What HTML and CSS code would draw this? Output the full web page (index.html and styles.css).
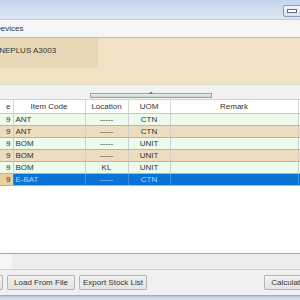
FILE: index.html
```html
<!DOCTYPE html>
<html lang="en">
<head>
    <meta charset="UTF-8">
    <title>Stock Take</title>
    <link rel="stylesheet" href="styles.css">
</head>
<body>
    <div class="window">
        <div class="title-bar">
            <button class="min-btn"><span class="dash"></span></button>
        </div>

        <div class="tab-strip">
            <span class="tab-label">Devices</span>
        </div>

        <div class="device-area">
            <div class="device-panel">
                <span class="device-name">ONEPLUS A3003</span>
            </div>
        </div>

        <div class="splitter-row">
            <div class="splitter">&#8963;</div>
        </div>

        <div class="grid-area">
            <table class="grid">
                <colgroup>
                    <col class="c-no">
                    <col class="c-item">
                    <col class="c-loc">
                    <col class="c-uom">
                    <col class="c-remark">
                    <col>
                </colgroup>
                <thead>
                    <tr>
                        <th class="no">e</th>
                        <th>Item Code</th>
                        <th>Location</th>
                        <th>UOM</th>
                        <th>Remark</th>
                        <th></th>
                    </tr>
                </thead>
                <tbody>
                    <tr class="green">
                        <td class="no">9</td><td class="left">ANT</td><td>-----</td><td>CTN</td><td></td><td></td>
                    </tr>
                    <tr class="tan">
                        <td class="no">9</td><td class="left">ANT</td><td>-----</td><td>CTN</td><td></td><td></td>
                    </tr>
                    <tr class="green">
                        <td class="no">9</td><td class="left">BOM</td><td>-----</td><td>UNIT</td><td></td><td></td>
                    </tr>
                    <tr class="tan">
                        <td class="no">9</td><td class="left">BOM</td><td>-----</td><td>UNIT</td><td></td><td></td>
                    </tr>
                    <tr class="green">
                        <td class="no">9</td><td class="left">BOM</td><td>KL</td><td>UNIT</td><td></td><td></td>
                    </tr>
                    <tr class="selected">
                        <td class="no">9</td><td class="left">E-BAT</td><td>-----</td><td>CTN</td><td></td><td></td>
                    </tr>
                </tbody>
            </table>
        </div>

        <div class="scroll-strip">
            <div class="scroll-thumb"></div>
        </div>

        <div class="button-bar">
            <button class="btn cut"></button>
            <button class="btn">Load From File</button>
            <button class="btn">Export Stock List</button>
            <div class="spacer"></div>
            <button class="btn calc">Calculate</button>
        </div>

        <div class="bottom-edge"></div>
    </div>
</body>
</html>
```

FILE: styles.css
```css
/* window chrome */
html, body {
    margin: 0;
    padding: 0;
}

body {
    width: 300px;
    height: 300px;
    overflow: hidden;
    font-family: "Liberation Sans", Arial, sans-serif;
    font-size: 8px;
    color: #333;
}

.window {
    display: flex;
    flex-direction: column;
    height: 300px;
}

.title-bar {
    height: 20px;
    flex: none;
    display: flex;
    justify-content: flex-end;
    align-items: flex-start;
    background: linear-gradient(#c3d6ee, #d3e1f1 60%, #dae6f3);
    border-bottom: 1px solid #bfcde0;
    box-sizing: border-box;
}

.min-btn {
    margin-top: 5px;
    width: 20px;
    height: 12px;
    margin-right: -3px;
    padding: 0;
    border: 1px solid #8a9bb3;
    border-radius: 2px;
    background: linear-gradient(#f2f6fb, #d6e1ef);
    display: flex;
    align-items: center;
    justify-content: center;
}

.min-btn .dash {
    display: block;
    width: 8px;
    height: 2px;
    margin-left: -2px;
    background: #fff;
    border: 1px solid #5b6f8c;
}

.tab-strip {
    height: 17px;
    flex: none;
    background: #f5f5f5;
    border-bottom: 1px solid #c6bb9c;
    display: flex;
    align-items: center;
}

.tab-label {
    margin-left: -5px;
    color: #333;
}

/* device info */
.device-area {
    height: 46px;
    flex: none;
    background: #efe3c4;
    border-bottom: 1px solid #e2dccb;
}

.device-panel {
    width: 98px;
    height: 30px;
    background: #e6d8b6;
    padding-top: 8px;
    box-sizing: border-box;
}

.device-name {
    margin-left: -7px;
    color: #333;
}

.splitter-row {
    height: 14px;
    flex: none;
    background: #f1f1f1;
    padding-left: 90px;
    padding-top: 8px;
    box-sizing: border-box;
}

.splitter {
    width: 122px;
    height: 5px;
    box-sizing: border-box;
    border: 1px solid #9aa39a;
    background: linear-gradient(#eef2ee, #c9d2cc);
    font-size: 7px;
    line-height: 2px;
    text-align: center;
    color: #222;
}

/* data grid */
.grid-area {
    flex: 1;
    background: #fff;
    border-top: 1px solid #d4d4d4;
    border-bottom: 1px solid #a8a8a8;
}

.grid {
    width: 302px;
    border-collapse: collapse;
    table-layout: fixed;
}

.c-no { width: 13px; }
.c-item { width: 72px; }
.c-loc { width: 43px; }
.c-uom { width: 42px; }
.c-remark { width: 128px; }

.grid th {
    height: 13px;
    font-weight: normal;
    color: #333;
    border-right: 1px solid #d8d8d8;
    border-bottom: 1px solid #c8c8c8;
    padding: 0;
    text-align: center;
}

.grid td {
    height: 11px;
    padding: 0;
    text-align: center;
    border-right: 1px solid #cfcfcf;
    border-bottom: 1px solid #b4b4b4;
    white-space: nowrap;
    overflow: hidden;
    color: #333;
}

.grid .no {
    text-align: right;
    padding-right: 2px;
}

.grid td.left {
    text-align: left;
    padding-left: 2px;
}

.grid tr.green td {
    background: #ecfbec;
}

.grid tr.tan td {
    background: #eddcbd;
}

.grid tr.selected td {
    background: #0a73d6;
    color: #a9ddff;
    border-right-color: #3b8fe0;
}

.grid tr.selected td.no {
    background: #e9cf9c;
    color: #333;
}

/* bottom bars */
.scroll-strip {
    height: 15px;
    flex: none;
    background: #ededed;
    border-bottom: 1px solid #cfcfcf;
}

.scroll-thumb {
    width: 12px;
    height: 15px;
    background: #f5f5f5;
}

.button-bar {
    height: 25px;
    flex: none;
    background: #f0f0f0;
    display: flex;
    align-items: flex-start;
    gap: 4px;
    padding-top: 5px;
    box-sizing: border-box;
    overflow: hidden;
}

.btn {
    height: 15px;
    padding: 0;
    border: 1px solid #b5b5b5;
    border-radius: 1px;
    background: linear-gradient(#f2f2f2, #e2e2e2);
    font-family: "Liberation Sans", Arial, sans-serif;
    font-size: 8px;
    color: #333;
    flex: none;
}

.btn.cut {
    width: 10px;
    margin-left: -7px;
}

.btn:nth-child(2) {
    width: 68px;
}

.btn:nth-child(3) {
    width: 68px;
}

.spacer {
    flex: 1;
}

.btn.calc {
    width: 48px;
    margin-right: -12px;
}

.bottom-edge {
    height: 5px;
    flex: none;
    background: linear-gradient(#7fa3cc, #c4d6ec 40%, #d4e2f2);
}
```
